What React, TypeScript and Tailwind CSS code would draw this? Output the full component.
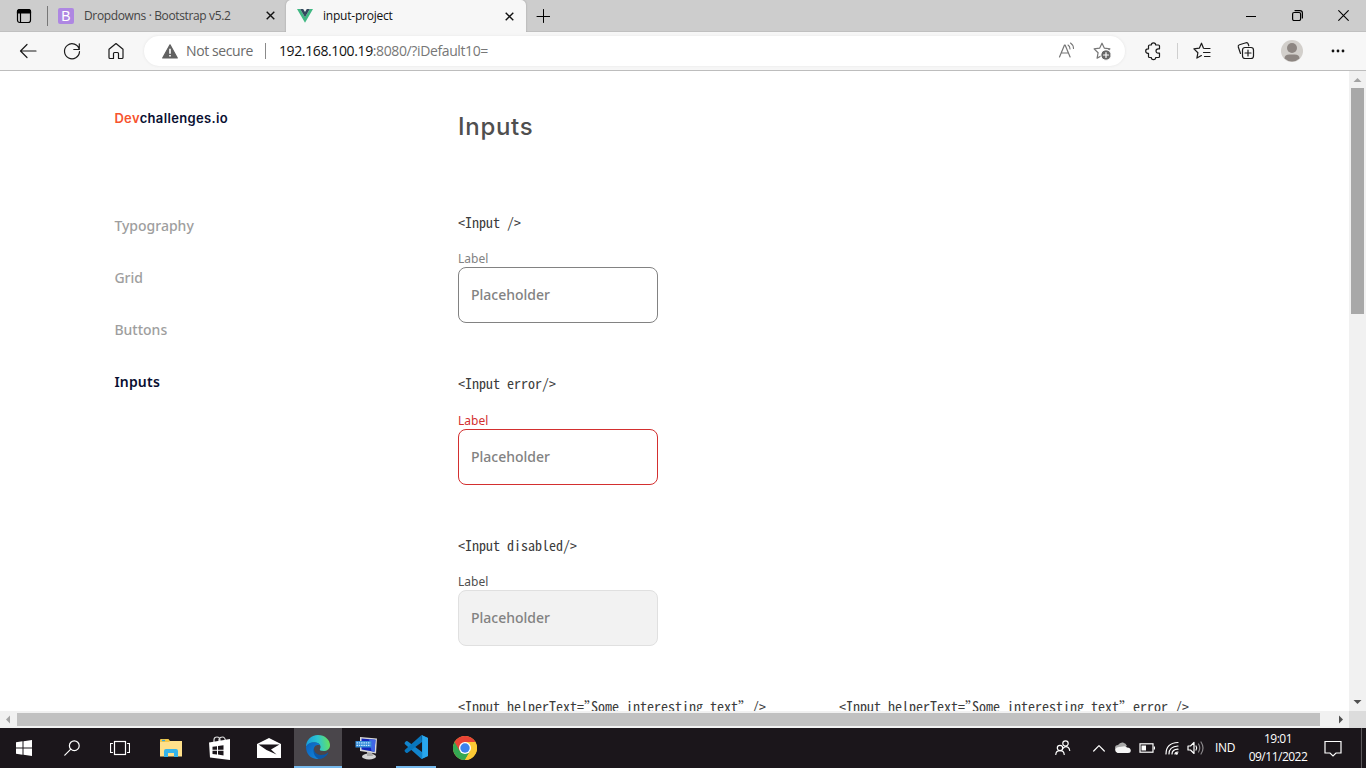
import type { ReactNode } from "react";

function Ico({ w = 20, h = 20, className = "", children }: { w?: number; h?: number; className?: string; children: ReactNode }) {
  return (
    <svg width={w} height={h} viewBox={`0 0 ${w} ${h}`} fill="none" stroke="currentColor" strokeWidth="1.2" strokeLinecap="round" strokeLinejoin="round" className={`shrink-0 ${className}`}>
      {children}
    </svg>
  );
}

function CloseIcon({ s = 9 }: { s?: number }) {
  return (
    <svg width={s} height={s} viewBox="0 0 9 9" stroke="#111" strokeWidth="1.4" className="shrink-0">
      <path d="M.7.7l7.6 7.6M8.3.7L.7 8.3" />
    </svg>
  );
}

function TabBar() {
  return (
    <div className="flex h-8 shrink-0 items-start bg-[#cdcdcd]">
      <div className="flex h-8 w-[286px] shrink-0 items-center border-b border-[#c0c0c0]">
        <Ico w={16} h={16} className="ml-4 text-black">
          <rect x="1.5" y="1.5" width="13" height="13" rx="2.2" />
          <path d="M1.5 3.5a2 2 0 0 1 2-2h9a2 2 0 0 1 2 2v1.5h-13z" fill="#000" />
          <path d="M4.5 5v9" />
        </Ico>
        <div className="ml-[15px] h-5 w-px bg-[#777]" />
        <div className="ml-[10px] flex size-4 items-center justify-center rounded-[2px] bg-[#ae87e2] font-['Liberation_Sans'] text-[14px] leading-none text-white">B</div>
        <span className="ml-[10px] w-[182px] shrink-0 whitespace-nowrap font-['Open_Sans',sans-serif] text-[12px] tracking-[-0.36px] text-[#444]">Dropdowns · Bootstrap v5.2</span>
        <CloseIcon />
      </div>
      <div className="flex h-8 w-[240px] shrink-0 items-center rounded-t-[5px] bg-[#f7f7f7] shadow-[0_0_2px_#999] [clip-path:inset(0_-3px_0_-3px)]">
        <svg width="16" height="14" viewBox="0 0 16 14" className="ml-[11px]">
          <path d="M0 0h3.2L8 8.2 12.800 0H16L8 13.800z" fill="#41b883" />
          <path d="M3.200 0h3L8 3 9.800 0h3L8 8.200z" fill="#34495e" />
        </svg>
        <span className="ml-[10px] w-[182px] whitespace-nowrap font-['Open_Sans',sans-serif] text-[12px] tracking-[-0.22px] text-[#111]">input-project</span>
        <CloseIcon />
      </div>
      <div className="flex h-8 grow items-center border-b border-[#c0c0c0]">
        <Ico w={14} h={14} className="ml-[10px] text-black"><path d="M7.500.5v13M1 7.500h13" strokeWidth="1" /></Ico>
        <div className="ml-auto flex items-center text-black">
          <Ico w={10} h={10} className="mr-[36px]"><path d="M0 5.500h10" strokeWidth="1" /></Ico>
          <Ico w={11} h={11} className="mr-[35px]">
            <rect x=".6" y="2.500" width="8" height="8" rx="1.500" />
            <path d="M3 .6h5a2.400 2.400 0 0 1 2.400 2.400v5" />
          </Ico>
          <Ico w={11} h={11} className="mr-[17px]"><path d="M.7.7l9.600 9.600M10.300.7L.7 10.300" strokeWidth="1.100" /></Ico>
        </div>
      </div>
    </div>
  );
}

const STAR = "M10 2.200l2.400 5 5.500.7-4 3.800 1 5.400-4.900-2.600-4.900 2.600 1-5.400-4-3.800 5.500-.7z";

function Toolbar() {
  return (
    <div className="flex h-[39px] shrink-0 items-center border-b border-[#bdbdbd] bg-[#f7f7f7] pl-1.5 text-[#1b1b1b]">
      <div className="flex w-11 justify-center"><Ico><path d="M18 10H2.500M9 3.500L2.500 10 9 16.500" /></Ico></div>
      <div className="flex w-11 justify-center"><Ico><path d="M17.300 8.500A7.500 7.500 0 1 0 17.500 10.500M17.300 2.800v5.700h-5.500" /></Ico></div>
      <div className="flex w-11 justify-center"><Ico><path d="M3 8.300L10 2.500l7 5.800v8.200a1 1 0 0 1-1 1h-3.500v-5a1 1 0 0 0-1-1h-3a1 1 0 0 0-1 1v5H4a1 1 0 0 1-1-1z" /></Ico></div>
      <div className="ml-1.5 flex h-[30px] w-[981px] shrink-0 items-center rounded-full bg-white shadow-[0_0_3px_#e4e4e4]">
        <svg width="16" height="15" viewBox="0 0 16 15" className="ml-[18px] shrink-0">
          <path d="M8 .8L15.300 14H.7z" fill="#616161" stroke="#616161" strokeLinejoin="round" strokeWidth="1.200" />
          <path d="M7.200 4.800h1.600v5H7.200zM7.200 11h1.600v1.600H7.200z" fill="#fff" />
        </svg>
        <span className="ml-2 w-[79px] whitespace-nowrap pb-px font-['Open_Sans',sans-serif] text-[14px] tracking-[-0.4px] text-[#6b6b6b]">Not secure</span>
        <div className="h-4 w-px bg-[#8a8a8a]" />
        <span className="ml-[13px] whitespace-nowrap pb-px font-['Open_Sans',sans-serif] text-[14px] tracking-[-0.38px] text-[#777]"><span className="text-[#111]">192.168.100.19</span>:8080/?iDefault10=</span>
        <Ico className="ml-auto mr-[15px] text-[#767676]">
          <path d="M2.500 16L7.500 4h.6l5 12M4.300 12h7.200" strokeWidth="1.200" />
          <path d="M11 4q2 1.300 2 4M13.500 2q3 2 3 5.500" strokeWidth="1.100" />
        </Ico>
        <Ico className="mr-[13px] text-[#767676]">
          <path d={STAR} />
          <circle cx="14" cy="14" r="5.200" fill="#666" stroke="#fff" strokeWidth="1" />
          <path d="M14 11.500v5M11.500 14h5" stroke="#fff" />
        </Ico>
      </div>
      <Ico className="ml-[18px]">
        <path d="M6.500 4H8.300a2.200 2.200 0 0 1 4.400 0h2.800a1 1 0 0 1 1 1v2.800h-1.300a2.200 2.200 0 0 0 0 4.400h1.300v3.300a1 1 0 0 1-1 1h-2.800a2.200 2.200 0 0 1-4.400 0H6.500a1 1 0 0 1-1-1V12.300h-.6a2.200 2.200 0 0 1 0-4.400h.6V5a1 1 0 0 1 1-1z" />
      </Ico>
      <div className="ml-[14px] h-4 w-px bg-[#cfcfcf]" />
      <Ico className="ml-[14px]">
        <path d="M11.500 7.200L9.500 2.200 7.300 7.200l-5.400.7 4 3.800-1 5.400 4.500-2.500M12.500 7.500h5.500M11.500 11.500h6.500M12.500 15.500h5.500" />
      </Ico>
      <Ico className="ml-6">
        <path d="M4.500 12.500L2.300 6a1.800 1.800 0 0 1 1.200-2.200l6.500-2a1.800 1.800 0 0 1 2.200 1.200l.6 1.800" />
        <rect x="6.500" y="6.500" width="11" height="11" rx="2.500" />
        <path d="M12 9v6M9 12h6" />
      </Ico>
      <svg width="22" height="22" viewBox="0 0 22 22" className="ml-[25px] shrink-0">
        <circle cx="11" cy="11" r="11" fill="#d2cfcb" />
        <circle cx="11" cy="8" r="5" fill="#8d8682" />
        <path d="M3.500 18.500q0-4 5-4h5q5 0 5 4a11 11 0 0 1-15 0z" fill="#8d8682" />
      </svg>
      <svg width="14" height="4" viewBox="0 0 14 4" className="ml-7 shrink-0" fill="#111">
        <circle cx="2" cy="2" r="1.400" /><circle cx="7" cy="2" r="1.400" /><circle cx="12" cy="2" r="1.400" />
      </svg>
    </div>
  );
}

function Code({ children }: { children: ReactNode }) {
  return <div className="h-5 whitespace-pre font-['Noto_Sans_Mono_CJK_SC','Liberation_Mono',monospace] text-[14px] leading-5 text-[#3c3c3c]">{children}</div>;
}

function Quote() {
  return <span className="tracking-[-7px]">”</span>;
}

function Field({ code, label, box }: { code: string; label: string; box: string }) {
  return (
    <div className="h-[161.5px]">
      <Code>{code}</Code>
      <div className={`mt-[19.4px] h-4 font-['Noto_Sans',sans-serif] text-[12px] leading-4 ${label}`}>Label</div>
      <div className={`flex h-14 w-[200px] items-center rounded-lg border px-3 pb-[0.5px] font-['Noto_Sans',sans-serif] text-[14px] font-medium text-[#828282] ${box}`}>Placeholder</div>
    </div>
  );
}

function Page() {
  return (
    <div className="flex grow overflow-hidden bg-white">
      <aside className="w-[458px] shrink-0 pl-[114.4px] pt-[37px] font-['Noto_Sans',sans-serif]">
        <div className="h-5 whitespace-nowrap font-['Inter',sans-serif] text-[13px] font-semibold leading-5 tracking-[0.34px] text-[#090f31]"><span className="text-[#f7542e]">Dev</span>challenges.io</div>
        <nav className="mt-[88px] flex flex-col gap-8 text-[14px] font-medium leading-5 text-[#9e9e9e]">
          <a>Typography</a><a>Grid</a><a>Buttons</a><a className="font-semibold tracking-[0.2px] text-[#090f31]">Inputs</a>
        </nav>
      </aside>
      <main className="grow">
        <h1 className="mt-[38px] h-9 font-['Inter',sans-serif] text-[24px] font-medium leading-9 tracking-[0.7px] text-[#4f4f4f]">Inputs</h1>
        <div className="pt-[66.8px]">
          <Field code="<Input />" label="text-[#828282]" box="border-[#828282]" />
          <Field code="<Input error/>" label="text-[#d32f2f]" box="border-[#d32f2f]" />
          <Field code="<Input disabled/>" label="text-[#4f4f4f]" box="border-[#e0e0e0] bg-[#f2f2f2]" />
          <div className="flex">
            <div className="w-[381px]"><Code>{"<Input helperText="}<Quote />Some interesting text<Quote />{" />"}</Code></div>
            <Code>{"<Input helperText="}<Quote />Some interesting text<Quote />{" error />"}</Code>
          </div>
        </div>
      </main>
      <div className="flex w-[17px] shrink-0 flex-col items-center bg-[#f1f1f1]">
        <svg width="17" height="17" viewBox="0 0 17 17"><path d="M4.500 11l4-4 4 4z" fill="#a3a3a3" /></svg>
        <div className="h-[226px] w-[13px] bg-[#a8a8a8]" />
        <svg width="17" height="17" viewBox="0 0 17 17" className="mt-auto"><path d="M4.500 6h8l-4 4z" fill="#505050" /></svg>
      </div>
    </div>
  );
}

function HScroll() {
  return (
    <div className="flex h-[17px] shrink-0 items-center bg-[#f1f1f1]">
      <svg width="17" height="17" viewBox="0 0 17 17"><path d="M10 4.500v8L6 8.500z" fill="#a3a3a3" /></svg>
      <div className="h-[13px] w-[1303px] bg-[#c1c1c1]" />
      <svg width="17" height="17" viewBox="0 0 17 17" className="ml-3"><path d="M7 4.500v8l4-4z" fill="#505050" /></svg>
      <div className="h-[17px] w-[17px] bg-[#dcdcdc]" />
    </div>
  );
}

function Cell({ className = "", children }: { className?: string; children: ReactNode }) {
  return <div className={`flex h-10 w-12 shrink-0 items-center justify-center ${className}`}>{children}</div>;
}

function Taskbar() {
  return (
    <div className="flex h-10 shrink-0 items-center bg-[#1b161b] text-white">
      <Cell><svg width="16" height="16" viewBox="0 0 16 16" fill="#fff"><path d="M0 2.200l6.500-.9v6.200H0zM7.500 1.200L16 0v7.500H7.500zM0 8.500h6.500v6.200L0 13.800zM7.500 8.500H16V16l-8.500-1.200z" /></svg></Cell>
      <Cell><Ico w={16} h={16}><circle cx="10.300" cy="5.700" r="4.900" /><path d="M6.800 9.200L.8 15.200" /></Ico></Cell>
      <Cell><Ico w={20} h={16}><rect x="4.500" y="1.500" width="11" height="13" strokeLinejoin="miter" /><path d="M2.500 3.500h-2v9h2M17.500 3.500h2v9h-2" strokeLinejoin="miter" /></Ico></Cell>
      <div className="ml-[3px] flex gap-px">
        <Cell>
          <svg width="22" height="18" viewBox="0 0 22 18">
            <path d="M0 1q0-1 1-1h7.500l1.500 2H22v15H0z" fill="#f5c746" /><path d="M2 .8h3v1.400H2z" fill="#35a9e0" />
            <path d="M0 3h9l1-1h12v15.500H0z" fill="#ffe08a" /><path d="M4 18v-6q0-2 2-2h10q2 0 2 2v6h-4v-4H8v4z" fill="#35b4ea" />
          </svg>
        </Cell>
        <Cell>
          <svg width="22" height="24" viewBox="0 0 22 24">
            <path d="M5 6V4Q5 1 8 1t3 3v2M10 5V3q1-2 3.500-2t3 4" fill="none" stroke="#ddd" strokeWidth="1.200" />
            <path d="M0 6.500L21 3v21L1 21.500z" fill="#fff" />
            <path d="M3.500 10.700l4.500-.5v3.600H3.500zM9 10l5.500-.8v4.600H9zM3.500 14.800H8v3.700l-4.500-.4zM9 14.800h5.500v4.600L9 18.600z" fill="#1b161b" />
          </svg>
        </Cell>
        <Cell>
          <svg width="24" height="20" viewBox="0 0 24 20">
            <path d="M0 6L12 0l12 6v14H0z" fill="#fff" /><path d="M1.500 6.500h21L14 11.500l5.500 5L9.500 12z" fill="#1b161b" />
          </svg>
        </Cell>
        <Cell className="border-b-2 border-[#76b9ed] bg-[#4a464b]">
          <svg width="24" height="24" viewBox="0 0 24 24">
            <defs>
              <linearGradient id="edgeTop" x1="0" y1=".5" x2="1" y2=".4"><stop stopColor="#189ddb" /><stop offset=".5" stopColor="#2cc4d2" /><stop offset="1" stopColor="#67e35b" /></linearGradient>
              <linearGradient id="edgeLow" x1="0" y1="0" x2="1" y2="1"><stop stopColor="#0b60bb" /><stop offset="1" stopColor="#1287dc" /></linearGradient>
            </defs>
            <path d="M0 12C0 5 5 0 12 0s12 5 12 10c0 4-3 6-6.500 6-3 0-4.300-1-3.500-2 2-3-1-6.500-5-6.500-4.500 0-7.500 1.500-9 4.500z" fill="url(#edgeTop)" />
            <path d="M8.500 10.500C7 13 8 20 15 20c3 0 5-1 6.500-2.300.6-.4 1 .1.700.5C20 22 16.500 24 12.500 24 8 23 5 17 8.500 10.500z" fill="#0b58a8" />
            <path d="M0 12c1-3 4-4.700 8-4.700 3 0 5 1 6 3-2-.7-4.200-.2-5.200 1.200C6 15 7.500 21.500 12.500 24 5 24.500 0 19 0 12z" fill="url(#edgeLow)" />
          </svg>
        </Cell>
        <Cell>
          <svg width="24" height="24" viewBox="0 0 24 24">
            <ellipse cx="14" cy="20.500" rx="7" ry="3" fill="#d5d5d5" /><path d="M12 16h5l1 4h-6z" fill="#aaa" />
            <path d="M5 1l17 1.500-1 15L5 15z" fill="#d7d7d7" /><path d="M6.500 2.500l14 1.200-1 12L6.500 13.500z" fill="#1324bb" />
            <path d="M14 3.200l6.500.5-1 12-3-.5z" fill="#3f65e5" /><path d="M.5 5h16v6.500H.5z" fill="#338bd9" />
            <path d="M1.500 6.800h14M1.500 9.300h14" stroke="#c7e8ff" strokeWidth="1.300" strokeDasharray="1.500 .8" />
          </svg>
        </Cell>
        <div className="flex w-12 shrink-0 justify-center">
          <div className="flex h-10 w-10 items-center justify-center border-b-2 border-[#76b9ed]">
            <svg width="24" height="24" viewBox="0 0 24 24">
              <path d="M17.500 0L24 3v18l-6.500 3L1 9.200q-1-1 0-2l1-1q.8-.6 1.600 0L18 17V7z" fill="#1284cc" />
              <path d="M17.500 0L1 14.800q-1 1 0 2l1 1q.8.600 1.600 0L18 7z" fill="#0876bd" />
              <path d="M17.500 0L24 3v18l-6.500 3q.8-.7.8-2V2q0-1.300-.8-2z" fill="#29a7ee" />
            </svg>
          </div>
        </div>
        <Cell>
          <svg width="24" height="24" viewBox="0 0 24 24">
            <circle cx="12" cy="12" r="12" fill="#fcc934" />
            <path d="M12 12L1.600 6A12 12 0 0 0 12 24l5.200-9z" fill="#34a853" />
            <path d="M1.600 6A12 12 0 0 1 22.400 6H12L6.800 15z" fill="#e94335" />
            <path d="M22.400 6A12 12 0 0 1 12 24l5.200-9L12 6z" fill="#fcc934" />
            <circle cx="12" cy="12" r="6" fill="#fff" /><circle cx="12" cy="12" r="4.700" fill="#3b82ee" />
          </svg>
        </Cell>
      </div>
      <div className="ml-auto flex h-10 items-center">
        <Ico w={16} h={16} className="mr-[22px]">
          <circle cx="10.500" cy="3.500" r="2.700" /><path d="M8.300 8Q10.500 5.500 13 7.200q1.500 1 1.700 3.300" />
          <circle cx="5" cy="8" r="2.700" /><path d="M.8 14.500q.3-3.800 4.200-3.800t4.200 3.800" />
        </Ico>
        <Ico w={12} h={8} className="mr-[10px]"><path d="M.7 7L6 1.700 11.300 7" /></Ico>
        <svg width="16" height="12" viewBox="0 0 16 12" className="mr-[8px]">
          <path d="M3 9a3 3 0 0 1 0-6q2-3 5-2.500T12 4z" fill="#a8a8a8" /><path d="M2.500 11q-3-1.500-2-4 1-2 3.500-2l4-.5q2-1 4 1 3.500 0 3.800 3 0 2.500-2.800 2.500z" fill="#f5f5f5" />
        </svg>
        <Ico w={16} h={10} className="mr-[10px]"><rect x="1" y=".8" width="13" height="8.400" strokeLinejoin="miter" /><path d="M15.400 3.500v3" strokeLinecap="butt" /><path d="M2.500 2.500H7v5H2.500z" fill="#fff" stroke="none" /></Ico>
        <Ico w={14} h={14} className="mr-[8px]">
          <path d="M1 13Q1 2 13 1.500M4 13Q4 5.500 13 5M7 13q0-4.500 6-4.800M10 13q0-2 3-2" /><circle cx="11.700" cy="12.500" r="1.200" fill="#fff" stroke="none" />
        </Ico>
        <Ico w={17} h={14} className="mr-[11px]">
          <path d="M1 5h2.500L7 1.500v11L3.500 9H1z" /><path d="M9 5q1.400 2 0 4" /><path d="M11.500 3q2.500 4 0 8M14 1q4 6 0 12" stroke="#8b888b" />
        </Ico>
        <span className="w-[20px] whitespace-nowrap font-['Open_Sans',sans-serif] text-[12px] tracking-[-0.3px]">IND</span>
        <div className="ml-[10px] w-[66px] whitespace-nowrap text-center font-['Open_Sans',sans-serif] text-[12px] leading-[18px] tracking-[-0.5px]"><div>19:01</div><div>09/11/2022</div></div>
        <Ico w={18} h={17} className="ml-[13px] mr-[19px]"><path d="M1 1.500h16v11.500h-5L9 16l-3-3H1z" strokeLinejoin="miter" /></Ico>
        <div className="mr-1 h-10 w-px bg-[#5b575b]" />
      </div>
    </div>
  );
}

export default function App() {
  return (
    <div className="flex h-[768px] w-[1366px] flex-col overflow-hidden">
      <TabBar />
      <Toolbar />
      <Page />
      <HScroll />
      <Taskbar />
    </div>
  );
}
